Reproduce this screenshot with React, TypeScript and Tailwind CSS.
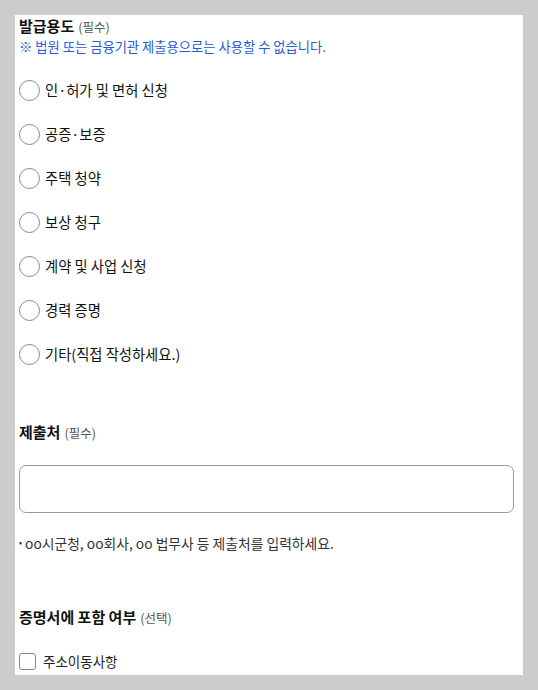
import React from "react";

const options = [
  "인·허가 및 면허 신청",
  "공증·보증",
  "주택 청약",
  "보상 청구",
  "계약 및 사업 신청",
  "경력 증명",
  "기타(직접 작성하세요.)",
];

export default function App() {
  return (
    <div
      className="min-h-[690px] w-full bg-[#cccccc] pt-[15px] pl-[15px] pr-[15px]"
      style={{ fontFamily: '"Noto Sans CJK KR", "Noto Sans", sans-serif' }}
    >
      <div className="w-[508px] h-[660px] bg-white pl-[4px] overflow-hidden">
        <div className="flex items-baseline gap-[4px] pt-[1px] leading-[19px]">
          <span className="text-[15px] font-bold text-[#111]">발급용도</span>
          <span className="text-[12.5px] text-[#555]">(필수)</span>
        </div>
        <p className="mt-[1px] text-[13.3px] leading-[20px] text-[#2a5bd7]">
          ※ 법원 또는 금융기관 제출용으로는 사용할 수 없습니다.
        </p>
        <div className="mt-[11px] flex flex-col">
          {options.map((o) => (
            <label key={o} className="flex h-[44px] items-center gap-[5px]">
              <span className="block h-[21px] w-[21px] rounded-full border border-[#888] bg-white" />
              <span className="text-[14.3px] text-[#111]">{o}</span>
            </label>
          ))}
        </div>
        <div className="mt-[46px] flex items-baseline gap-[4px] leading-[20px]">
          <span className="text-[15px] font-bold text-[#111]">제출처</span>
          <span className="text-[12.5px] text-[#555]">(필수)</span>
        </div>
        <div className="mt-[22px] h-[48px] w-[495px] rounded-[7px] border border-[#999]" />
        <p className="mt-[20px] flex items-center text-[13.8px] leading-[20px] text-[#333]">
          <span className="mr-[3px] text-[9px]">•</span>
          oo시군청, oo회사, oo 법무사 등 제출처를 입력하세요.
        </p>
        <div className="mt-[54px] flex items-baseline gap-[4px] leading-[20px]">
          <span className="text-[15px] font-bold text-[#111]">증명서에 포함 여부</span>
          <span className="text-[12.5px] text-[#555]">(선택)</span>
        </div>
        <label className="mt-[23px] flex items-center gap-[7px]">
          <span className="block h-[17px] w-[17px] rounded-[3px] border border-[#888] bg-white" />
          <span className="text-[13.5px] text-[#222]">주소이동사항</span>
        </label>
      </div>
    </div>
  );
}
